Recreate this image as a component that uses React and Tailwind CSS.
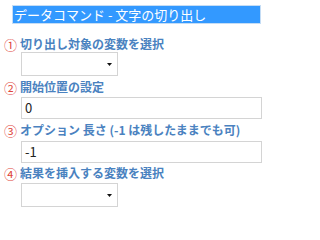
import React from 'react'

function Label({ num, children }) {
  return (
    <div className="flex items-center h-[16px] text-[12px] font-bold leading-none">
      <span className="text-[#e0463c] w-[16px] text-[13px] font-normal">{num}</span>
      <span className="text-[#4a82c0]">{children}</span>
    </div>
  )
}

function SelectBox() {
  return (
    <div className="ml-[17px] w-[97px] h-[24px] border border-[#d4d4d4] bg-white flex items-center justify-end pr-[5px]">
      <svg width="5" height="3" viewBox="0 0 5 3">
        <path d="M0 0H5L2.5 3Z" fill="#111" />
      </svg>
    </div>
  )
}

function TextBox({ value }) {
  return (
    <div className="ml-[17px] w-[241px] h-[22px] border border-[#d4d4d4] bg-white flex items-center px-[3px] text-[13px] text-[#222]">
      {value}
    </div>
  )
}

export default function App() {
  return (
    <div
      className="w-[280px] h-[221px] bg-white pt-[5px] pl-[4px]"
      style={{ fontFamily: '"Noto Sans CJK JP", "Noto Sans", sans-serif' }}
    >
      <div className="ml-[8px] w-[249px] h-[19px] bg-[#3399ff] border border-[#c5ddf5] flex items-center pl-[1px] text-white text-[13px] leading-none">
        データコマンド - 文字の切り出し
      </div>
      <div className="mt-[12px] flex flex-col">
        <Label num="①">切り出し対象の変数を選択</Label>
        <SelectBox />
        <div className="mt-[3px]"><Label num="②">開始位置の設定</Label></div>
        <div className="mt-[2px]"><TextBox value="0" /></div>
        <div className="mt-[3px]"><Label num="③">オプション 長さ (-1 は残したままでも可)</Label></div>
        <div className="mt-[3px]"><TextBox value="-1" /></div>
        <div className="mt-[2px]"><Label num="④">結果を挿入する変数を選択</Label></div>
        <div className="mt-[2px]"><SelectBox /></div>
      </div>
    </div>
  )
}
